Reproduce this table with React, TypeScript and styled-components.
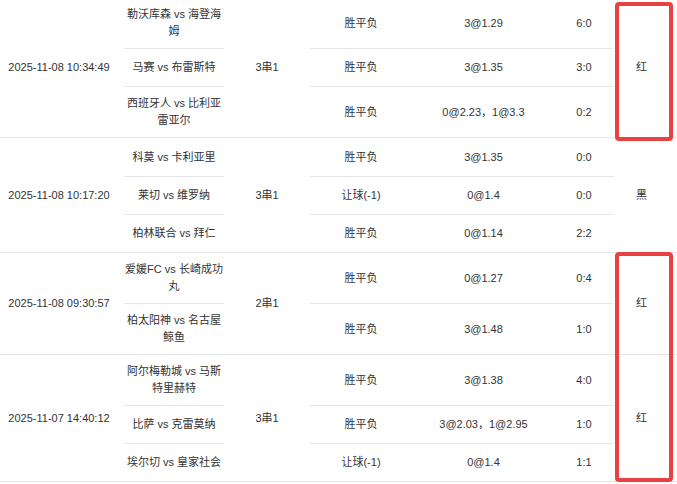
import React from "react";
import styled, { createGlobalStyle } from "styled-components";

const GlobalStyle = createGlobalStyle`
  html, body {
    margin: 0;
    padding: 0;
    background: #ffffff;
  }
  body {
    font-family: "Liberation Sans", Arial, "Noto Sans CJK SC", sans-serif;
    font-size: 11px;
    color: #333333;
    overflow: hidden;
  }
`;

type Match = { teams: string; play: string; odds: string; score: string };
type Group = { time: string; type: string; result: string; matches: Match[] };

const groups: Group[] = [
  {
    time: "2025-11-08 10:34:49",
    type: "3串1",
    result: "红",
    matches: [
      { teams: "勒沃库森 vs 海登海姆", play: "胜平负", odds: "3@1.29", score: "6:0" },
      { teams: "马赛 vs 布雷斯特", play: "胜平负", odds: "3@1.35", score: "3:0" },
      { teams: "西班牙人 vs 比利亚雷亚尔", play: "胜平负", odds: "0@2.23，1@3.3", score: "0:2" },
    ],
  },
  {
    time: "2025-11-08 10:17:20",
    type: "3串1",
    result: "黑",
    matches: [
      { teams: "科莫 vs 卡利亚里", play: "胜平负", odds: "3@1.35", score: "0:0" },
      { teams: "莱切 vs 维罗纳", play: "让球(-1)", odds: "0@1.4", score: "0:0" },
      { teams: "柏林联合 vs 拜仁", play: "胜平负", odds: "0@1.14", score: "2:2" },
    ],
  },
  {
    time: "2025-11-08 09:30:57",
    type: "2串1",
    result: "红",
    matches: [
      { teams: "爱媛FC vs 长崎成功丸", play: "胜平负", odds: "0@1.27", score: "0:4" },
      { teams: "柏太阳神 vs 名古屋鲸鱼", play: "胜平负", odds: "3@1.48", score: "1:0" },
    ],
  },
  {
    time: "2025-11-07 14:40:12",
    type: "3串1",
    result: "红",
    matches: [
      { teams: "阿尔梅勒城 vs 马斯特里赫特", play: "胜平负", odds: "3@1.38", score: "4:0" },
      { teams: "比萨 vs 克雷莫纳", play: "胜平负", odds: "3@2.03，1@2.95", score: "1:0" },
      { teams: "埃尔切 vs 皇家社会", play: "让球(-1)", odds: "0@1.4", score: "1:1" },
    ],
  },
];

const Wrapper = styled.div`
  position: relative;
  width: 677px;
  margin-top: -2px;
`;

const GroupGrid = styled.div`
  display: grid;
  grid-template-columns: 124px 100px 86px 102px 143px 58px 64px;
  border-bottom: 1px solid #e6e6e6;
`;

const Cell = styled.div<{ $col: number; $row: number; $divider?: boolean }>`
  grid-column: ${(p) => p.$col};
  grid-row: ${(p) => p.$row};
  box-sizing: border-box;
  min-height: 38px;
  padding: 8px 0;
  line-height: 17px;
  display: flex;
  align-items: center;
  justify-content: center;
  text-align: center;
  border-top: ${(p) => (p.$divider ? "1px solid #e6e6e6" : "none")};
`;

const SpanCell = styled.div<{ $col: number; $span: number; $padRight?: number }>`
  grid-column: ${(p) => p.$col};
  grid-row: 1 / span ${(p) => p.$span};
  display: flex;
  align-items: center;
  justify-content: center;
  text-align: center;
  line-height: 17px;
  padding-right: ${(p) => p.$padRight ?? 0}px;
  white-space: nowrap;
`;

const RedFrame = styled.div<{ $top: number; $height: number }>`
  position: absolute;
  left: 615px;
  width: 58px;
  top: ${(p) => p.$top}px;
  height: ${(p) => p.$height}px;
  box-sizing: border-box;
  border: 4px solid #e94141;
  border-radius: 4px;
  pointer-events: none;
`;

function MatchGroup({ group }: { group: Group }) {
  const n = group.matches.length;
  return (
    <GroupGrid>
      <SpanCell $col={1} $span={n} $padRight={6}>
        {group.time}
      </SpanCell>
      <SpanCell $col={3} $span={n}>
        {group.type}
      </SpanCell>
      <SpanCell $col={7} $span={n} $padRight={7}>
        {group.result}
      </SpanCell>
      {group.matches.map((m, i) => (
        <React.Fragment key={i}>
          <Cell $col={2} $row={i + 1} $divider={i > 0}>
            {m.teams}
          </Cell>
          <Cell $col={4} $row={i + 1} $divider={i > 0}>
            {m.play}
          </Cell>
          <Cell $col={5} $row={i + 1} $divider={i > 0}>
            {m.odds}
          </Cell>
          <Cell $col={6} $row={i + 1} $divider={i > 0}>
            {m.score}
          </Cell>
        </React.Fragment>
      ))}
    </GroupGrid>
  );
}

export default function App() {
  return (
    <>
      <GlobalStyle />
      <Wrapper>
        {groups.map((g, i) => (
          <MatchGroup key={i} group={g} />
        ))}
        <RedFrame $top={4} $height={139} />
        <RedFrame $top={254} $height={230} />
      </Wrapper>
    </>
  );
}
